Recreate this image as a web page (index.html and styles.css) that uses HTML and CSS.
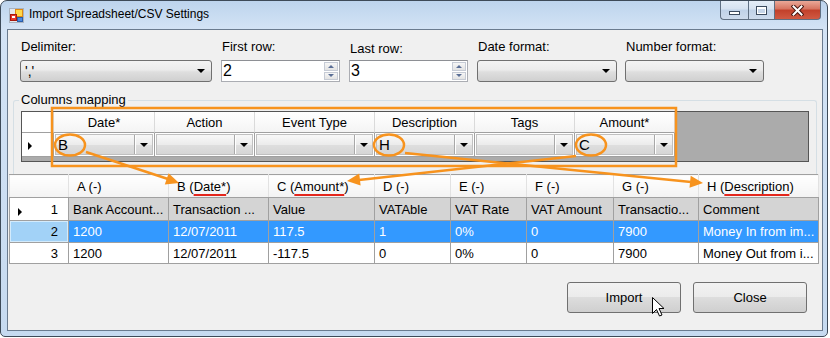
FILE: index.html
```html
<!DOCTYPE html>
<html lang="en">
<head>
    <meta charset="UTF-8">
    <title>Import Spreadsheet/CSV Settings</title>
    <link rel="stylesheet" href="styles.css">
</head>
<body>

    <div class="window">
        <div class="titlebar">
            <svg class="app-icon" width="16" height="16" viewBox="0 0 16 16">
                <rect x="0.5" y="0.5" width="14" height="14" fill="#e4e8ee" stroke="#a9b3c0"/>
                <rect x="6.5" y="1.5" width="7" height="7" fill="#ffd84a" stroke="#e08a12"/>
                <rect x="1.5" y="6.5" width="6" height="6" fill="#e8382c" stroke="#a8190f"/>
                <rect x="3" y="8" width="3" height="2" fill="#ffffff"/>
                <rect x="8.5" y="9.5" width="5" height="4" fill="#4d8be0" stroke="#2a5ea8"/>
            </svg>
            <span class="title">Import Spreadsheet/CSV Settings</span>
            <div class="caption">
                <div class="cap cap-min"><span></span></div>
                <div class="cap cap-max"><span></span></div>
                <div class="cap cap-close">
                    <svg width="13" height="11" viewBox="0 0 13 11">
                        <path d="M2.5 1.5 L10.5 9.5 M10.5 1.5 L2.5 9.5" stroke="#4a1710" stroke-width="4" stroke-linecap="square"/>
                        <path d="M2.5 1.5 L10.5 9.5 M10.5 1.5 L2.5 9.5" stroke="#ffffff" stroke-width="2" stroke-linecap="square"/>
                    </svg>
                </div>
            </div>
        </div>

        <div class="client">
            <div class="fields">
                <div class="field w-delim">
                    <label>Delimiter:</label>
                    <div class="combo"><span>','</span></div>
                </div>
                <div class="field w-row">
                    <label>First row:</label>
                    <div class="spin">
                        <span class="val">2</span>
                        <div class="spin-btns"><i class="up"></i><i class="down"></i></div>
                    </div>
                </div>
                <div class="field w-row lower">
                    <label>Last row:</label>
                    <div class="spin">
                        <span class="val">3</span>
                        <div class="spin-btns"><i class="up"></i><i class="down"></i></div>
                    </div>
                </div>
                <div class="field w-date">
                    <label>Date format:</label>
                    <div class="combo"><span></span></div>
                </div>
                <div class="field w-num">
                    <label>Number format:</label>
                    <div class="combo"><span></span></div>
                </div>
            </div>

            <fieldset class="group">
                <legend>Columns mapping</legend>
                <div class="map-grid">
                    <table class="map-table">
                        <colgroup>
                            <col style="width:32px"><col style="width:101px"><col style="width:100px">
                            <col style="width:120px"><col style="width:100px"><col style="width:100px"><col style="width:100px">
                        </colgroup>
                        <tr>
                            <th class="rh"></th>
                            <th>Date*</th>
                            <th>Action</th>
                            <th>Event Type</th>
                            <th>Description</th>
                            <th>Tags</th>
                            <th>Amount*</th>
                        </tr>
                        <tr>
                            <td class="rh"><span class="tri"></span></td>
                            <td><div class="cell-combo"><span class="val">B</span><span class="drop"></span></div></td>
                            <td><div class="cell-combo"><span class="val"></span><span class="drop"></span></div></td>
                            <td><div class="cell-combo"><span class="val"></span><span class="drop"></span></div></td>
                            <td><div class="cell-combo"><span class="val">H</span><span class="drop"></span></div></td>
                            <td><div class="cell-combo"><span class="val"></span><span class="drop"></span></div></td>
                            <td><div class="cell-combo"><span class="val">C</span><span class="drop"></span></div></td>
                        </tr>
                    </table>
                </div>
            </fieldset>

            <table class="data-grid">
                <colgroup>
                    <col style="width:59px"><col style="width:100px"><col style="width:100px"><col style="width:106px">
                    <col style="width:76px"><col style="width:76px"><col style="width:87px"><col style="width:85px"><col style="width:120px">
                </colgroup>
                <tr class="head">
                    <th class="rh"></th>
                    <th>A (-)</th>
                    <th>B (<span class="mark">Date*</span>)</th>
                    <th>C (<span class="mark">Amount*</span>)</th>
                    <th>D (-)</th>
                    <th>E (-)</th>
                    <th>F (-)</th>
                    <th>G (-)</th>
                    <th>H (<span class="mark">Description</span>)</th>
                </tr>
                <tr class="names">
                    <td class="rh"><span class="tri"></span>1</td>
                    <td>Bank Account...</td>
                    <td>Transaction ...</td>
                    <td>Value</td>
                    <td>VATAble</td>
                    <td>VAT Rate</td>
                    <td>VAT Amount</td>
                    <td>Transactio...</td>
                    <td>Comment</td>
                </tr>
                <tr class="selected">
                    <td class="rh">2</td>
                    <td>1200</td>
                    <td>12/07/2011</td>
                    <td>117.5</td>
                    <td>1</td>
                    <td>0%</td>
                    <td>0</td>
                    <td>7900</td>
                    <td>Money In from im...</td>
                </tr>
                <tr class="last">
                    <td class="rh">3</td>
                    <td>1200</td>
                    <td>12/07/2011</td>
                    <td>-117.5</td>
                    <td>0</td>
                    <td>0%</td>
                    <td>0</td>
                    <td>7900</td>
                    <td>Money Out from i...</td>
                </tr>
            </table>

            <div class="actions">
                <button class="btn">Import</button>
                <button class="btn">Close</button>
            </div>
        </div>

        <!-- annotations drawn over the dialog -->
        <svg class="marks" width="828" height="337" viewBox="0 0 828 337">
            <g fill="none" stroke="#f7931e" stroke-width="2.5">
                <rect x="52" y="108" width="624" height="58"/>
                <ellipse cx="70" cy="145" rx="15" ry="10.5"/>
                <ellipse cx="389" cy="145" rx="15" ry="10.5"/>
                <ellipse cx="591" cy="145" rx="15" ry="10.5"/>
                <line x1="86" y1="152" x2="168" y2="179"/>
                <line x1="405" y1="153" x2="691" y2="182"/>
                <line x1="576" y1="156" x2="359" y2="180"/>
            </g>
            <g fill="#f7931e">
                <polygon points="179,183 164.8,184.6 168.6,173.2"/>
                <polygon points="703,183 690.7,175.7 689.5,187.7"/>
                <polygon points="347,181 359.2,173.6 360.6,185.6"/>
            </g>
            <path transform="translate(652.5,297.5)" d="M0 0 L0 16 L4 12 L7 18.5 L9.5 17.5 L6.5 11 L11.5 11 Z" fill="#ffffff" stroke="#000000" stroke-width="1"/>
        </svg>
    </div>

</body>
</html>
```

FILE: styles.css
```css
* {
    box-sizing: border-box;
}

body {
    margin: 0;
    font-family: "Liberation Sans", Arial, sans-serif;
    font-size: 13px;
    color: #000;
    background: #fff;
}

.window {
    position: relative;
    width: 828px;
    height: 337px;
    border: 1px solid #3d4a58;
    border-radius: 7px 7px 5px 5px;
    background: linear-gradient(to bottom, #bdd4ed 0, #d3e3f5 28px, #c6daf0 100%);
    display: flex;
    flex-direction: column;
    overflow: hidden;
}

/* title bar */

.titlebar {
    height: 28px;
    display: flex;
    align-items: flex-start;
    flex-shrink: 0;
}

.app-icon {
    margin: 7px 0 0 8px;
}

.title {
    margin: 5px 0 0 4px;
    font-size: 12px;
    line-height: 16px;
    color: #000;
}

.caption {
    display: flex;
    margin-left: auto;
    margin-right: 6px;
}

.cap {
    height: 19px;
    border: 1px solid #5f6f82;
    border-top: none;
    display: flex;
    align-items: center;
    justify-content: center;
    background: linear-gradient(#e4edf7, #d6e2f0 45%, #c0d2e8 50%, #cddbed);
}

.cap-min {
    width: 28px;
    border-right: none;
    border-radius: 0 0 0 4px;
}

.cap-min span {
    width: 11px;
    height: 4px;
    margin-top: 5px;
    background: #fff;
    border: 1px solid #3c4b5e;
}

.cap-max {
    width: 27px;
}

.cap-max span {
    width: 11px;
    height: 9px;
    border: 1px solid #3c4b5e;
    background: #c7d6e9;
    box-shadow: inset 0 2px 0 #fff, inset 0 0 0 1px #fff;
}

.cap-close {
    width: 46px;
    border-left: none;
    border-radius: 0 0 4px 0;
    background: linear-gradient(#eaa898, #d6735f 45%, #c2402a 50%, #d05a43);
}

/* client area */

.client {
    flex: 1;
    margin: 0 4px 5px 6px;
    border: 1px solid #6a7b8f;
    background: #f0f0f0;
    display: flex;
    flex-direction: column;
}

.fields {
    display: flex;
    margin: 9px 0 0 12px;
}

.field + .field {
    margin-left: 9px;
}

.field label {
    display: block;
    height: 16px;
    line-height: 16px;
    margin-bottom: 5px;
    padding-left: 1px;
}

.field.lower label {
    padding-top: 2px;
    line-height: 16px;
}

.w-delim { width: 192px; }
.w-row { width: 119px; }
.w-date { width: 140px; }
.w-num { width: 139px; margin-left: 8px !important; }

.combo {
    height: 22px;
    border: 1px solid #707070;
    border-radius: 3px;
    background: linear-gradient(#f3f3f3 0%, #ebebeb 45%, #dedede 55%, #d0d0d0 100%);
    display: flex;
    align-items: center;
    padding-left: 4px;
    font-size: 14px;
}

.combo::after {
    content: "";
    margin-left: auto;
    margin-right: 6px;
    border-left: 4px solid transparent;
    border-right: 4px solid transparent;
    border-top: 4px solid #000;
}

.spin {
    height: 22px;
    border: 1px solid #abadb3;
    border-top-color: #8e9095;
    background: #fff;
    display: flex;
}

.spin .val {
    flex: 1;
    padding-left: 1px;
    font-size: 16px;
    line-height: 20px;
}

.spin-btns {
    width: 14px;
    margin: 1px 1px 1px 0;
    display: flex;
    flex-direction: column;
    gap: 1px;
}

.spin-btns i {
    flex: 1;
    display: flex;
    align-items: center;
    justify-content: center;
    border: 1px solid #c6cbd5;
    background: linear-gradient(#f6f6f6, #e3e3e3);
}

.spin-btns i::after {
    content: "";
    border-left: 3px solid transparent;
    border-right: 3px solid transparent;
}

.spin-btns .up::after {
    border-bottom: 3px solid #5a6e96;
}

.spin-btns .down::after {
    border-top: 3px solid #5a6e96;
}

/* columns mapping */

.group {
    margin: 10px 5px 0 5px;
    padding: 3px 7px 12px 7px;
    border: 1px solid #d5dfe5;
    border-bottom: none;
    border-radius: 3px 3px 0 0;
    min-width: 0;
}

.group legend {
    padding: 0 2px;
    margin-left: -2px;
    line-height: 16px;
    font-size: 13px;
}

.map-grid {
    height: 51px;
    border: 1px solid #555;
    background: #ababab;
}

.map-table {
    border-collapse: separate;
    border-spacing: 0;
    table-layout: fixed;
    width: 653px;
}

.map-table th {
    height: 21px;
    padding: 0;
    font-weight: normal;
    text-align: center;
    background: linear-gradient(#ffffff, #f4f4f4);
    border-right: 1px solid #dadada;
    border-bottom: 1px solid #a0a0a0;
}

.map-table td {
    height: 23px;
    padding: 1px;
    background: #fff;
    border-right: 1px solid #a0a0a0;
    border-bottom: 1px solid #a0a0a0;
}

.map-table .rh {
    background: #fff;
    text-align: left;
    padding-left: 6px;
}

.tri {
    display: inline-block;
    border-top: 4px solid transparent;
    border-bottom: 4px solid transparent;
    border-left: 4px solid #000;
    vertical-align: middle;
}

.cell-combo {
    display: flex;
    height: 21px;
    border: 1px solid #c0c0c0;
    background: linear-gradient(#f8f8f8, #ececec 50%, #dfdfdf 50%, #d6d6d6);
}

.cell-combo .val {
    flex: 1;
    padding-left: 2px;
    font-size: 15px;
    line-height: 19px;
}

.cell-combo .drop {
    width: 18px;
    display: flex;
    align-items: center;
    justify-content: center;
    border-left: 1px solid #a8a8a8;
    box-shadow: inset 1px 0 0 #fff;
}

.cell-combo .drop::after {
    content: "";
    border-left: 4px solid transparent;
    border-right: 4px solid transparent;
    border-top: 4px solid #000;
}

/* data preview */

.data-grid {
    margin: 0 4px 0 1px;
    width: 809px;
    border-collapse: collapse;
    table-layout: fixed;
    border: 1px solid #696969;
    background: #fff;
}

.data-grid th,
.data-grid td {
    border: 1px solid #a0a0a0;
    padding: 0 4px;
    white-space: nowrap;
    overflow: hidden;
    text-align: left;
    font-weight: normal;
}

.data-grid .head th {
    height: 23px;
    padding-left: 8px;
    background: linear-gradient(#ffffff, #f3f3f3);
    border-left-color: #e2e2e2;
    border-right-color: #e2e2e2;
}

.data-grid td {
    height: 23px;
}

.data-grid .selected td {
    height: 22px;
}

.data-grid .last td {
    height: 21px;
}

.data-grid td.rh {
    text-align: right;
    padding-right: 10px;
    background: #fff;
}

.data-grid td.rh .tri {
    float: left;
    margin: 6px 0 0 4px;
}

.names td {
    background: #d4d4d4;
}

.names td.rh {
    background: #fff;
}

.selected td {
    background: #3399ff;
    color: #fff;
}

.selected td.rh {
    background: #a2d2f7;
    color: #000;
    box-shadow: inset 0 0 0 1px #d3ebfc;
}

.mark {
    text-decoration: underline;
    text-decoration-color: #e3261c;
    text-decoration-thickness: 2px;
    text-underline-offset: 3px;
}

.actions {
    display: flex;
    justify-content: flex-end;
    gap: 12px;
    margin-top: 18px;
    padding-right: 15px;
}

.btn {
    width: 114px;
    height: 31px;
    border: 1px solid #707070;
    border-radius: 3px;
    background: linear-gradient(#f2f2f2, #ebebeb 50%, #dddddd 50%, #cfcfcf);
    font-family: "Liberation Sans", Arial, sans-serif;
    font-size: 13px;
    color: #000;
    padding: 0;
}

.marks {
    position: absolute;
    top: -1px;
    left: -1px;
    pointer-events: none;
}
```
